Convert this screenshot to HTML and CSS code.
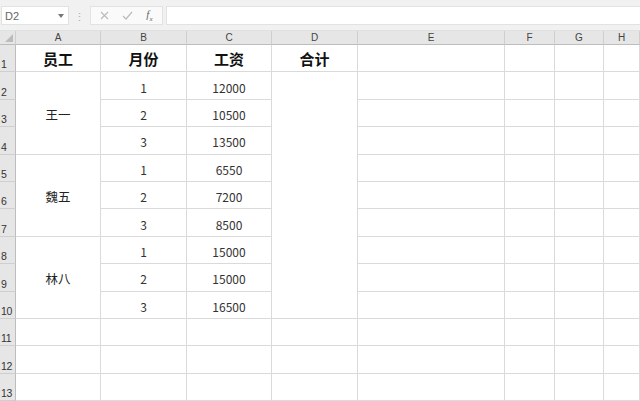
FILE: index.html
```html
<!DOCTYPE html>
<html lang="zh-CN">
	<head>
		<meta charset="UTF-8" />
		<title>工资表</title>
		<link rel="stylesheet" href="styles.css">
	</head>
	<body>
		<div class="toolbar">
			<div class="namebox">
				<span>D2</span>
				<svg class="caret" width="6" height="4" viewBox="0 0 6 4"><path d="M0 0H6L3 4Z" fill="#777"/></svg>
			</div>
			<div class="grip">⋮</div>
			<div class="fxbox">
				<svg width="9" height="9" viewBox="0 0 9 9"><path d="M1 1L8 8M8 1L1 8" stroke="#bbb" stroke-width="1.2"/></svg>
				<svg width="11" height="9" viewBox="0 0 11 9"><path d="M1 5L4 8L10 1" stroke="#bbb" stroke-width="1.2" fill="none"/></svg>
				<span class="fx">f<sub>x</sub></span>
			</div>
			<div class="formula"></div>
		</div>

		<div class="sheet">
			<div class="corner"><svg width="8" height="8" viewBox="0 0 8 8"><path d="M8 0V8H0Z" fill="#bcbcbc"/></svg></div>
			<div class="colhead">A</div>
			<div class="colhead">B</div>
			<div class="colhead">C</div>
			<div class="colhead">D</div>
			<div class="colhead">E</div>
			<div class="colhead">F</div>
			<div class="colhead">G</div>
			<div class="colhead">H</div>

			<div class="rowhead">1</div>
			<div class="cell title">员工</div>
			<div class="cell title">月份</div>
			<div class="cell title">工资</div>
			<div class="cell title">合计</div>
			<div class="cell"></div><div class="cell"></div><div class="cell"></div><div class="cell"></div>

			<div class="rowhead">2</div>
			<div class="cell merge3">王一</div>
			<div class="cell">1</div>
			<div class="cell">12000</div>
			<div class="cell merge9"></div>
			<div class="cell"></div><div class="cell"></div><div class="cell"></div><div class="cell"></div>

			<div class="rowhead">3</div>
			<div class="cell">2</div>
			<div class="cell">10500</div>
			<div class="cell"></div><div class="cell"></div><div class="cell"></div><div class="cell"></div>

			<div class="rowhead">4</div>
			<div class="cell">3</div>
			<div class="cell">13500</div>
			<div class="cell"></div><div class="cell"></div><div class="cell"></div><div class="cell"></div>

			<div class="rowhead">5</div>
			<div class="cell merge3">魏五</div>
			<div class="cell">1</div>
			<div class="cell">6550</div>
			<div class="cell"></div><div class="cell"></div><div class="cell"></div><div class="cell"></div>

			<div class="rowhead">6</div>
			<div class="cell">2</div>
			<div class="cell">7200</div>
			<div class="cell"></div><div class="cell"></div><div class="cell"></div><div class="cell"></div>

			<div class="rowhead">7</div>
			<div class="cell">3</div>
			<div class="cell">8500</div>
			<div class="cell"></div><div class="cell"></div><div class="cell"></div><div class="cell"></div>

			<div class="rowhead">8</div>
			<div class="cell merge3">林八</div>
			<div class="cell">1</div>
			<div class="cell">15000</div>
			<div class="cell"></div><div class="cell"></div><div class="cell"></div><div class="cell"></div>

			<div class="rowhead">9</div>
			<div class="cell">2</div>
			<div class="cell">15000</div>
			<div class="cell"></div><div class="cell"></div><div class="cell"></div><div class="cell"></div>

			<div class="rowhead">10</div>
			<div class="cell">3</div>
			<div class="cell">16500</div>
			<div class="cell"></div><div class="cell"></div><div class="cell"></div><div class="cell"></div>

			<div class="rowhead">11</div>
			<div class="cell"></div><div class="cell"></div><div class="cell"></div><div class="cell"></div>
			<div class="cell"></div><div class="cell"></div><div class="cell"></div><div class="cell"></div>

			<div class="rowhead">12</div>
			<div class="cell"></div><div class="cell"></div><div class="cell"></div><div class="cell"></div>
			<div class="cell"></div><div class="cell"></div><div class="cell"></div><div class="cell"></div>

			<div class="rowhead">13</div>
			<div class="cell"></div><div class="cell"></div><div class="cell"></div><div class="cell"></div>
			<div class="cell"></div><div class="cell"></div><div class="cell"></div><div class="cell"></div>
		</div>
	</body>
</html>
```

FILE: styles.css
```css
* {
	margin: 0;
	padding: 0;
	box-sizing: border-box;
}
body {
	width: 640px;
	height: 401px;
	overflow: hidden;
	background-color: #fff;
	font-family: "Noto Sans CJK SC", "Noto Sans", sans-serif;
	color: #222;
}
.toolbar {
	display: flex;
	align-items: center;
	height: 31px;
	padding: 1px 0 0 1px;
	background-color: #f1f1f1;
	border-bottom: 1px solid #e0e0e0;

	.namebox {
		display: flex;
		align-items: center;
		justify-content: space-between;
		width: 68px;
		height: 19px;
		padding: 0 4px 0 3px;
		background-color: #fff;
		border: 1px solid #e2e2e2;
		font-family: "Liberation Sans", Arial, sans-serif;
		font-size: 11px;
		color: #666;
	}
	.grip {
		width: 21px;
		text-align: center;
		font-size: 11px;
		color: #aaa;
	}
	.fxbox {
		display: flex;
		align-items: center;
		justify-content: space-around;
		width: 73px;
		height: 19px;
		padding: 0 3px;
		background-color: #fafafa;
		border: 1px solid #e2e2e2;

		.fx {
			font-family: "Liberation Serif", serif;
			font-style: italic;
			font-size: 11px;
			color: #666;
			sub {
				font-size: 7px;
			}
		}
	}
	.formula {
		flex: 1;
		height: 19px;
		margin-left: 3px;
		background-color: #fff;
		border: 1px solid #e2e2e2;
		border-right: none;
	}
}
.sheet {
	display: grid;
	grid-template-columns: 16px 85px 86px 85px 86px 147px 50px 49px 36px;
	grid-template-rows: 14px repeat(13, 27.4px);

	.corner {
		display: flex;
		align-items: flex-end;
		justify-content: flex-end;
		padding: 0 2px 2px 0;
		background-color: #e6e6e6;
		border-right: 1px solid #cfcfcf;
		border-bottom: 1px solid #bdbdbd;
	}
	.colhead {
		display: flex;
		align-items: center;
		justify-content: center;
		background-color: #e6e6e6;
		border-right: 1px solid #cfcfcf;
		border-bottom: 1px solid #bdbdbd;
		font-family: "Liberation Sans", Arial, sans-serif;
		font-size: 10px;
		color: #444;
	}
	.rowhead {
		display: flex;
		align-items: flex-end;
		padding: 0 0 1px 1px;
		background-color: #e6e6e6;
		border-right: 1px solid #bdbdbd;
		border-bottom: 1px solid #cfcfcf;
		font-family: "Liberation Sans", Arial, sans-serif;
		font-size: 10.5px;
		color: #333;
		letter-spacing: -0.3px;
	}
	.cell {
		display: flex;
		align-items: center;
		justify-content: center;
		padding-top: 3px;
		border-right: 1px solid #dadada;
		border-bottom: 1px solid #dadada;
		font-size: 12px;
		color: #333;
	}
	.title {
		padding-top: 0;
		font-size: 15px;
		font-weight: bold;
		color: #111;
	}
	.merge3 {
		grid-row: span 3;
		font-size: 12.5px;
		color: #222;
	}
	.merge9 {
		grid-row: span 9;
	}
}
```
